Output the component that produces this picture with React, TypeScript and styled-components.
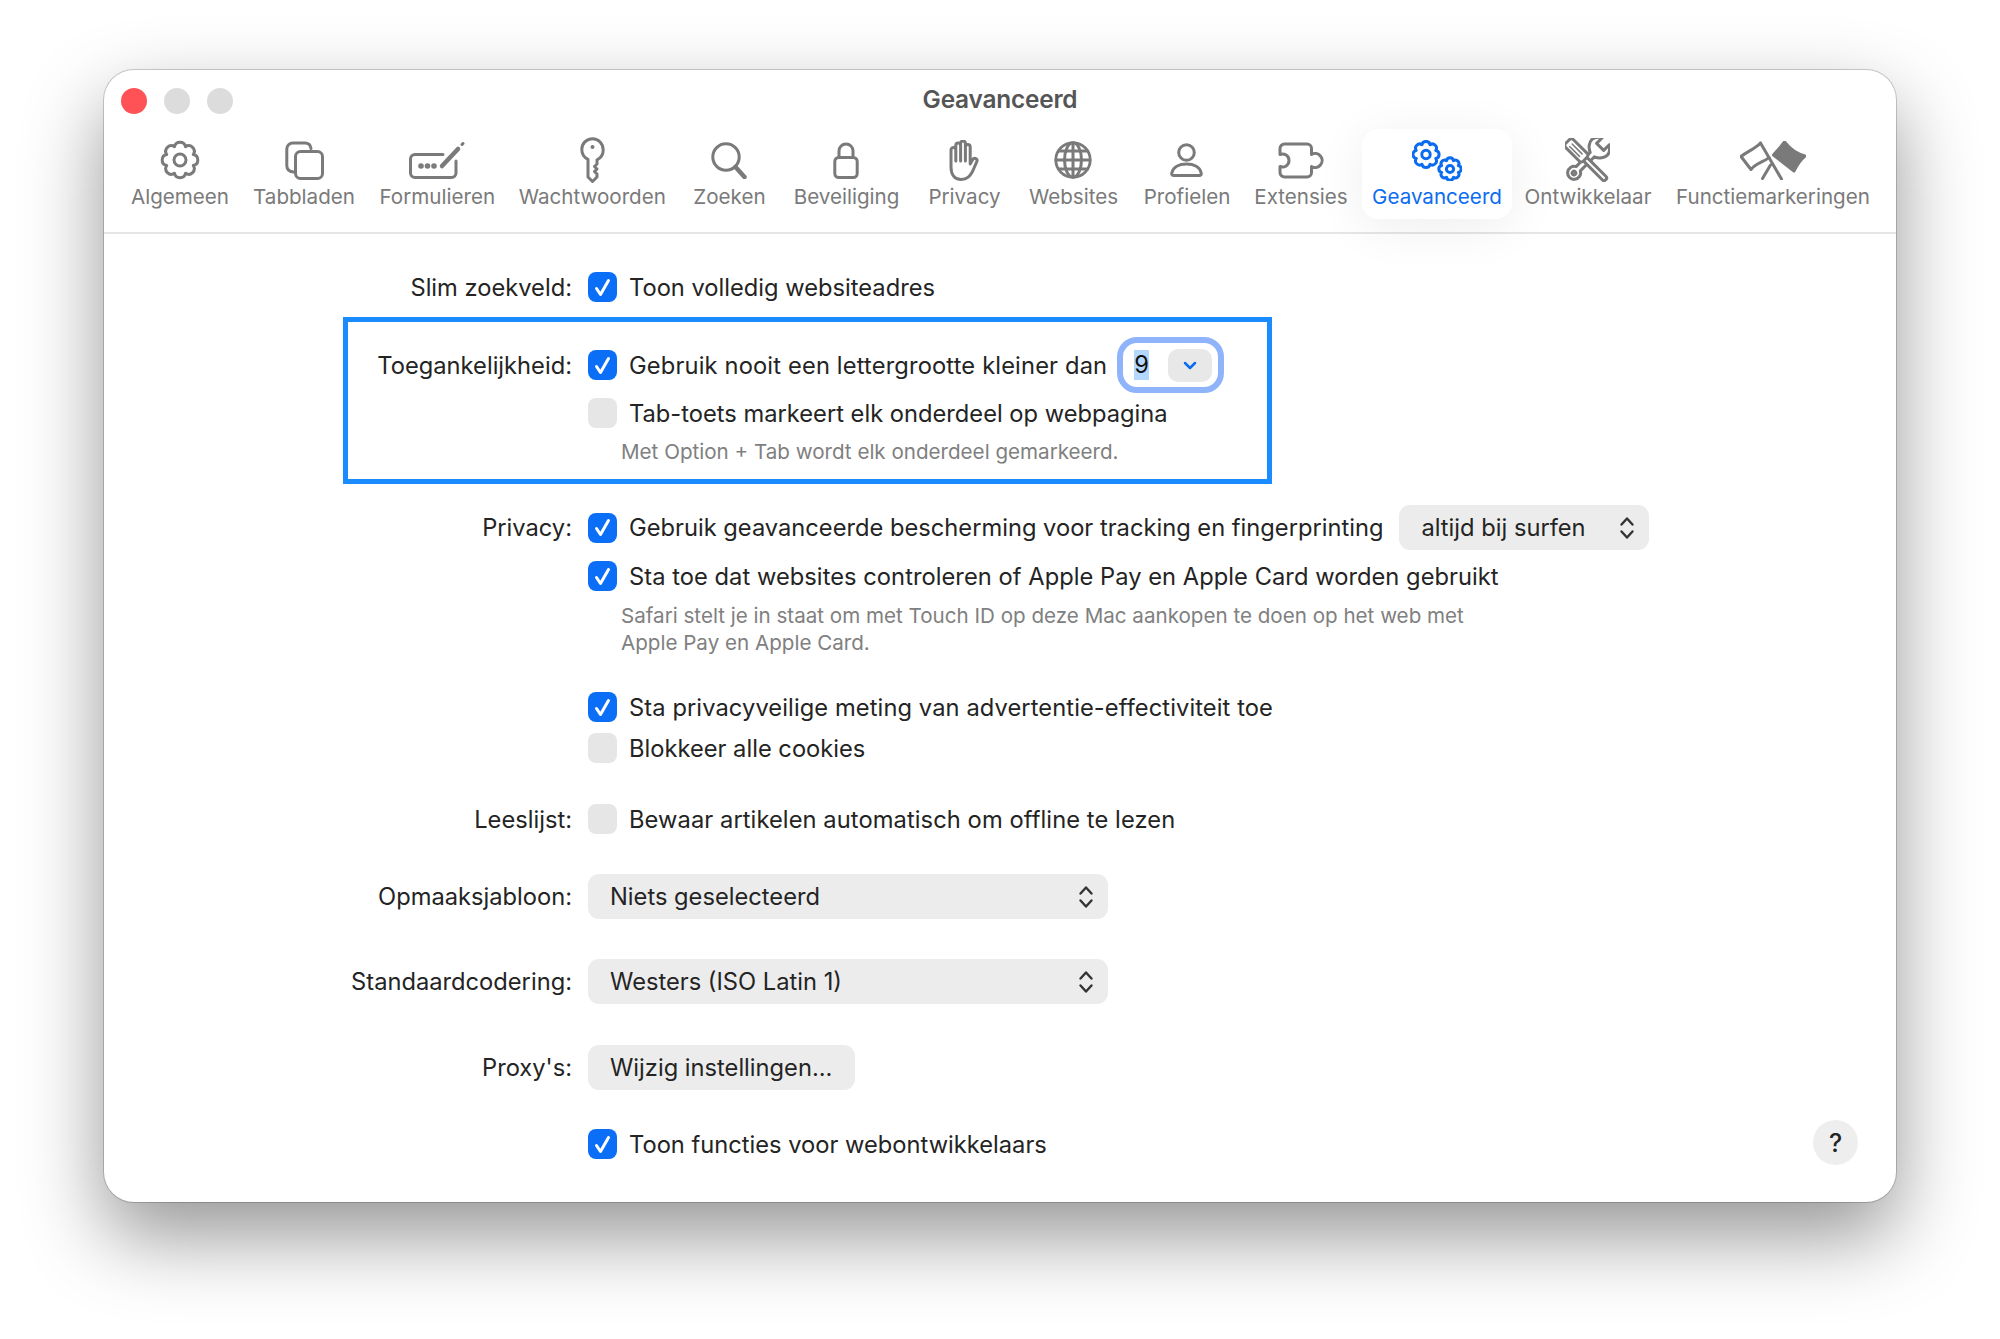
import { ReactNode } from "react"
import styled, { createGlobalStyle } from "styled-components"

const GlobalStyle = createGlobalStyle`
    html, body { margin: 0; background: #fff; }
    body { font-family: Inter, "Liberation Sans", sans-serif; color: #242424; }
`

const Page = styled.div`
    padding: 70px 104px 137px;
`

const Window = styled.div`
    position: relative;
    height: 1132px;
    display: flex;
    flex-direction: column;
    background: #fff;
    border-radius: 30px;
    box-shadow: 0 0 0 1px rgba(0,0,0,.18), 0 34px 80px rgba(0,0,0,.42);
`

const TitleBar = styled.header`
    height: 59px;
    display: grid;
    grid-template-columns: 1fr auto 1fr;
    align-items: center;
    padding: 0 17px;
`

const Lights = styled.div`
    display: flex;
    gap: 17px;
    margin-top: 2px;
`

const Light = styled.span<{ $color: string }>`
    width: 26px;
    height: 26px;
    border-radius: 50%;
    background: ${p => p.$color};
`

const Title = styled.h1`
    margin: 0 0 2px;
    font-size: 24.4px;
    font-weight: 600;
    color: #555;
    letter-spacing: -.2px;
`

const Toolbar = styled.nav`
    height: 105px;
    box-sizing: border-box;
    display: flex;
    align-items: flex-start;
    padding-left: 20px;
    border-bottom: 2px solid #e6e6e6;
`

const ToolItem = styled.div<{ $w: number; $active?: boolean }>`
    flex: none;
    width: ${p => p.$w}px;
    height: 90px;
    box-sizing: border-box;
    padding-top: 7px;
    display: flex;
    flex-direction: column;
    align-items: center;
    border-radius: 16px;
    font-size: 20.6px;
    white-space: nowrap;
    color: ${p => p.$active ? "#0b6cf0" : "#7a7a7a"};
    background: ${p => p.$active ? "#fff" : "transparent"};
    box-shadow: ${p => p.$active ? "0 8px 50px rgba(0,0,0,.07)" : "none"};
`

const IconSlot = styled.div`
    height: 48px;
    display: flex;
    align-items: center;
    justify-content: center;
`

const Icon = styled.svg`
    fill: none;
    stroke: currentColor;
    stroke-width: 3;
    stroke-linecap: round;
    stroke-linejoin: round;
    display: block;
`

const Body = styled.main`
    padding-top: 33px;
`

const Row = styled.div<{ $mt?: number; $h?: number }>`
    display: grid;
    grid-template-columns: 468px 1fr;
    column-gap: 16px;
    align-items: center;
    height: ${p => p.$h ?? 40}px;
    margin-top: ${p => p.$mt ?? 0}px;
    font-size: 23.7px;
`

const Label = styled.div`
    text-align: right;
    white-space: nowrap;
`

const Controls = styled.div<{ $ls?: number }>`
    display: flex;
    align-items: center;
    white-space: nowrap;
    letter-spacing: ${p => p.$ls ?? 0}px;
`

const Box = styled.span<{ $on?: boolean }>`
    flex: none;
    width: 29px;
    height: 30px;
    margin-right: 12px;
    border-radius: 8px;
    display: flex;
    align-items: center;
    justify-content: center;
    background: ${p => p.$on ? "#0b6ef7" : "#e6e6e6"};
`

const Hint = styled.p<{ $mt: number }>`
    margin: ${p => p.$mt}px 0 0 517px;
    font-size: 20.6px;
    line-height: 27px;
    color: #808080;
`

const Highlighted = styled.section<{ $mt: number }>`
    position: relative;
    margin-top: ${p => p.$mt}px;
`

const Highlight = styled.div`
    position: absolute;
    top: -28px;
    bottom: -19px;
    left: 239px;
    width: 929px;
    box-sizing: border-box;
    border: 5px solid #1a8cff;
    pointer-events: none;
`

const SizeField = styled.div`
    margin: -8px 0 -8px 10px;
    width: 78px;
    height: 44px;
    box-sizing: content-box;
    display: flex;
    align-items: center;
    justify-content: space-between;
    padding: 0 6px 0 11px;
    border: 6px solid #8fb4fb;
    border-radius: 20px;
    background: #fff;
`

const Selected = styled.span`
    width: 15px;
    line-height: 30px;
    text-align: center;
    color: #111;
    background: #b3d7ff;
`

const Stepper = styled.span`
    width: 44px;
    height: 33px;
    border-radius: 10px;
    background: #e8e8e8;
    color: #0b6cf0;
    display: flex;
    align-items: center;
    justify-content: center;
`

const Select = styled.div<{ $w: number; $ml?: number }>`
    width: ${p => p.$w}px;
    height: 45px;
    margin-left: ${p => p.$ml ?? 0}px;
    box-sizing: border-box;
    padding: 0 14px 0 22px;
    display: flex;
    align-items: center;
    justify-content: space-between;
    border-radius: 11px;
    background: #ececec;
`

const HelpButton = styled.button`
    position: absolute;
    right: 38px;
    bottom: 37px;
    width: 45px;
    height: 45px;
    padding: 0;
    border: 0;
    border-radius: 50%;
    background: #eee;
    color: #242424;
    font: 500 25px Inter, sans-serif;
`

// one bumpy gear outline, computed so the two sizes in the toolbar share it
function gearPath(cx: number, cy: number, r: number, teeth = 8) {
    const step = (Math.PI * 2) / teeth
    const valley = r * 0.8
    const pt = (rad: number, a: number) => `${(cx + rad * Math.cos(a)).toFixed(2)} ${(cy + rad * Math.sin(a)).toFixed(2)}`
    let d = `M${pt(valley, -step / 2)}`
    for (let i = 0; i < teeth; i++) {
        const a = i * step - step / 2
        d += ` C${pt(r * 1.1, a + step * 0.22)} ${pt(r * 1.1, a + step * 0.78)} ${pt(valley, a + step)}`
    }
    return d + " Z"
}

const Algemeen = (
    <Icon width="40" height="40" viewBox="0 0 40 40" strokeWidth={2.6}>
        <path d={gearPath(20, 20, 18)} />
        <circle cx="20" cy="20" r="6" />
    </Icon>
)

const Tabbladen = (
    <Icon width="39" height="39" viewBox="0 0 39 39">
        <path d="M8.5 31C4 30.5 1.8 28.5 1.8 24.5V8a6 6 0 0 1 6-6H20c3.5 0 5.5 1.800 6 5.500" />
        <rect x="10.500" y="10.500" width="27" height="27" rx="5" />
    </Icon>
)

const Formulieren = (
    <Icon width="56" height="37" viewBox="0 0 56 37">
        <path d="M34 12.500H6a4.500 4.500 0 0 0-4.500 4.500V31A4.500 4.500 0 0 0 6 35.500H42.500A4.500 4.500 0 0 0 47 31V19" />
        <path d="M33 24L49 7" strokeWidth="4.500" />
        <path d="M53 2.500L54 1.500" />
        <circle cx="12" cy="24" r="1.300" />
        <circle cx="18.500" cy="24" r="1.300" />
        <circle cx="25" cy="24" r="1.300" />
    </Icon>
)

const Wachtwoorden = (
    <Icon width="25" height="46" viewBox="0 0 25 46">
        <path d="M12.500 1.800C6.500 1.800 1.800 6.500 1.800 12.500c0 4.500 2.500 8 6.200 9.800V40l4.500 4.500 4.500-4.500v-3l-2.500-2.500 2.500-2.500-2.500-2.500 2.500-2.500v-4.200c3.700-1.800 6.200-5.300 6.200-9.800C23.200 6.500 18.500 1.800 12.500 1.800Z" />
        <circle cx="12.500" cy="10" r="2" fill="currentColor" stroke="none" />
    </Icon>
)

const Zoeken = (
    <Icon width="36" height="37" viewBox="0 0 36 37" strokeWidth={3.2}>
        <circle cx="15" cy="15" r="13.200" />
        <path d="M24.500 25L33.500 35" strokeWidth="4.500" />
    </Icon>
)

const Beveiliging = (
    <Icon width="26" height="37" viewBox="0 0 26 37">
        <rect x="1.800" y="15.500" width="22.400" height="20" rx="4" />
        <path d="M6 15.500V9a7 7 0 0 1 14 0v6.500" />
    </Icon>
)

const Privacy = (
    <Icon width="31" height="41" viewBox="0 0 31 41" strokeWidth={2.5}>
        <path d="M2 27V10a2.400 2.400 0 0 1 4.800 0v11V5.500a2.400 2.400 0 0 1 4.800 0V21V3.500a2.400 2.400 0 0 1 4.800 0V21V7a2.400 2.400 0 0 1 4.800 0v17l2.500-4.500a2.300 2.300 0 0 1 4 2.300l-4.200 9.700C21 36 18.500 39.500 12 39.500C6 39.500 2 35 2 27Z" />
    </Icon>
)

const Websites = (
    <Icon width="38" height="38" viewBox="0 0 38 38" strokeWidth={2.2}>
        <circle cx="19" cy="19" r="17.200" strokeWidth="2.800" />
        <ellipse cx="19" cy="19" rx="8.500" ry="17.200" />
        <path d="M19 2V36M2 19H36M4.500 10H33.500M4.500 28H33.500" />
    </Icon>
)

const Profielen = (
    <Icon width="33" height="34" viewBox="0 0 33 34">
        <circle cx="16.500" cy="9.500" r="7.800" />
        <path d="M4 32.500C2 32.500 1.500 31.500 1.800 30C3 24 9 21 16.500 21S30 24 31.200 30C31.500 31.500 31 32.500 29 32.500Z" />
    </Icon>
)

const Extensies = (
    <Icon width="46" height="37" viewBox="0 0 46 37">
        <path d="M6.500 2H29a4.500 4.500 0 0 1 4.500 4.500V12.500A7 7 0 1 1 33.500 24.500V30.500A4.500 4.500 0 0 1 29 35H6.500A4.500 4.500 0 0 1 2 30.500V24.500A6.500 6.500 0 1 0 2 12.500V6.500A4.500 4.500 0 0 1 6.500 2Z" />
    </Icon>
)

const Geavanceerd = (
    <Icon width="50" height="41" viewBox="0 0 50 41" strokeWidth={2.6}>
        <path d={gearPath(14, 14.500, 13.200)} />
        <circle cx="14" cy="14.500" r="4.200" />
        <path d={gearPath(38, 29, 11.300)} />
        <circle cx="38" cy="29" r="3.600" />
    </Icon>
)

const Ontwikkelaar = (
    <Icon width="45" height="44" viewBox="0 0 45 44" strokeWidth={2.2}>
        <g transform="translate(33 11) rotate(45)" fill="#fff">
            <path d="M-3 8V28a6.500 6.500 0 1 0 6 0V8C8 6 11 1.500 11-2C11-6 8-9 5-11V-3H-5V-11C-8-9-11-6-11-2C-11 1.500-8 6-3 8Z" />
            <circle cy="34" r="1.800" />
        </g>
        <g transform="translate(11 12) rotate(-45)" fill="#fff">
            <rect x="-2.500" y="12" width="5" height="30" rx="2" />
            <rect x="-5.500" y="-12" width="11" height="25" rx="3" />
            <path d="M-2-7V7M1.500-7V7" strokeWidth="1.500" />
        </g>
    </Icon>
)

const Functiemarkeringen = (
    <Icon width="66" height="39" viewBox="0 0 66 39" strokeWidth={2.6}>
        <path d="M20.500 2C15 8 8 10 1 15.500L11 28.500C16 22 24 21 29 16.500" />
        <path d="M20.500 2L41.500 38M22.500 37.500L30.500 24" />
        <path d="M44.500 1C40 7 37 10 33.500 14L54 30C57 24 60 19 65 15C57 13 50 8 44.500 1Z" fill="currentColor" />
    </Icon>
)

const tools: { label: string; icon: ReactNode; w: number; active?: boolean }[] = [
    { label: "Algemeen", icon: Algemeen, w: 112 },
    { label: "Tabbladen", icon: Tabbladen, w: 136 },
    { label: "Formulieren", icon: Formulieren, w: 130.6 },
    { label: "Wachtwoorden", icon: Wachtwoorden, w: 179.4 },
    { label: "Zoeken", icon: Zoeken, w: 95 },
    { label: "Beveiliging", icon: Beveiliging, w: 139 },
    { label: "Privacy", icon: Privacy, w: 97 },
    { label: "Websites", icon: Websites, w: 121 },
    { label: "Profielen", icon: Profielen, w: 106 },
    { label: "Extensies", icon: Extensies, w: 122 },
    { label: "Geavanceerd", icon: Geavanceerd, w: 150, active: true },
    { label: "Ontwikkelaar", icon: Ontwikkelaar, w: 152 },
    { label: "Functiemarkeringen", icon: Functiemarkeringen, w: 218 },
]

const Check = ({ on }: { on?: boolean }) => (
    <Box $on={on}>
        {on && (
            <svg width="17" height="19" viewBox="0 0 17 19" fill="none" stroke="#fff" strokeWidth="3" strokeLinecap="round" strokeLinejoin="round">
                <path d="M2.500 10.500L6.500 16.500L14.500 2.500" />
            </svg>
        )}
    </Box>
)

const UpDown = () => (
    <svg width="16" height="24" viewBox="0 0 16 24" fill="none" stroke="#333" strokeWidth="2.400" strokeLinecap="round" strokeLinejoin="round">
        <path d="M2.500 8.500L8 2.500L13.500 8.500M2.500 15.500L8 21.500L13.500 15.500" />
    </svg>
)

export default function App() {
    return (
        <Page>
            <GlobalStyle />
            <Window>
                <TitleBar>
                    <Lights>
                        <Light $color="#ff5257" />
                        <Light $color="#dcdcdc" />
                        <Light $color="#dcdcdc" />
                    </Lights>
                    <Title>Geavanceerd</Title>
                </TitleBar>
                <Toolbar>
                    {tools.map(t => (
                        <ToolItem key={t.label} $w={t.w} $active={t.active}>
                            <IconSlot>{t.icon}</IconSlot>
                            {t.label}
                        </ToolItem>
                    ))}
                </Toolbar>
                <Body>
                    <Row>
                        <Label>Slim zoekveld:</Label>
                        <Controls><Check on />Toon volledig websiteadres</Controls>
                    </Row>
                    <Highlighted $mt={38}>
                        <Highlight />
                        <Row>
                            <Label>Toegankelijkheid:</Label>
                            <Controls $ls={0.15}>
                                <Check on />Gebruik nooit een lettergrootte kleiner dan
                                <SizeField>
                                    <Selected>9</Selected>
                                    <Stepper>
                                        <svg width="14" height="9" viewBox="0 0 14 9" fill="none" stroke="currentColor" strokeWidth="2.500" strokeLinecap="round" strokeLinejoin="round">
                                            <path d="M2 2L7 7L12 2" />
                                        </svg>
                                    </Stepper>
                                </SizeField>
                            </Controls>
                        </Row>
                        <Row $mt={8}>
                            <span />
                            <Controls><Check />Tab-toets markeert elk onderdeel op webpagina</Controls>
                        </Row>
                        <Hint $mt={5}>Met Option + Tab wordt elk onderdeel gemarkeerd.</Hint>
                    </Highlighted>
                    <Row $mt={40}>
                        <Label>Privacy:</Label>
                        <Controls>
                            <Check on />Gebruik geavanceerde bescherming voor tracking en fingerprinting
                            <Select $w={250} $ml={16}>altijd bij surfen<UpDown /></Select>
                        </Controls>
                    </Row>
                    <Row $mt={11}>
                        <span />
                        <Controls $ls={0.04}><Check on />Sta toe dat websites controleren of Apple Pay en Apple Card worden gebruikt</Controls>
                    </Row>
                    <Hint $mt={6}>
                        Safari stelt je in staat om met Touch ID op deze Mac aankopen te doen op het web met<br />
                        Apple Pay en Apple Card.
                    </Hint>
                    <Row $mt={31}>
                        <span />
                        <Controls $ls={0.09}><Check on />Sta privacyveilige meting van advertentie-effectiviteit toe</Controls>
                    </Row>
                    <Row $mt={1}>
                        <span />
                        <Controls><Check />Blokkeer alle cookies</Controls>
                    </Row>
                    <Row $mt={31}>
                        <Label>Leeslijst:</Label>
                        <Controls $ls={0.08}><Check />Bewaar artikelen automatisch om offline te lezen</Controls>
                    </Row>
                    <Row $mt={35} $h={45}>
                        <Label>Opmaaksjabloon:</Label>
                        <Controls><Select $w={520}>Niets geselecteerd<UpDown /></Select></Controls>
                    </Row>
                    <Row $mt={40} $h={45}>
                        <Label>Standaardcodering:</Label>
                        <Controls><Select $w={520}>Westers (ISO Latin 1)<UpDown /></Select></Controls>
                    </Row>
                    <Row $mt={41} $h={45}>
                        <Label>Proxy's:</Label>
                        <Controls><Select $w={267}>Wijzig instellingen...</Select></Controls>
                    </Row>
                    <Row $mt={34}>
                        <span />
                        <Controls><Check on />Toon functies voor webontwikkelaars</Controls>
                    </Row>
                </Body>
                <HelpButton>?</HelpButton>
            </Window>
        </Page>
    )
}
